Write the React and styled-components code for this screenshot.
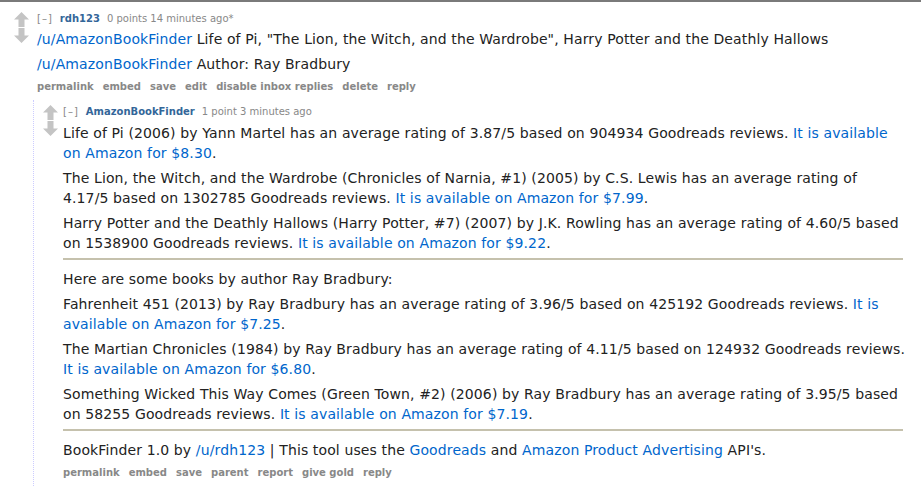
import React from 'react';
import styled, { createGlobalStyle } from 'styled-components';

const Global = createGlobalStyle`
  html, body { margin: 0; padding: 0; background: #fff; }
  body { font-family: "DejaVu Sans", Verdana, sans-serif; color: #222; }
`;

const Page = styled.div`
  border-top: 2px solid #7a7a7a;
  height: 484px;
  overflow: hidden;
`;

const Comment = styled.div`
  display: flex;
  align-items: flex-start;
  padding-top: ${p => p.$top || 0}px;
`;

const Votes = styled.div`
  display: flex;
  flex-direction: column;
  align-items: center;
  gap: 1px;
  width: ${p => p.$w}px;
  padding-left: ${p => p.$pl}px;
  box-sizing: border-box;
  flex: none;
`;

const Entry = styled.div`
  flex: 1;
  min-width: 0;
`;

const Tagline = styled.div`
  font-size: 10px;
  color: #888;
  line-height: 14px;
  display: flex;
  gap: 7px;
  align-items: baseline;
`;

const Expand = styled.span`
  letter-spacing: 1px;
`;

const Author = styled.span`
  color: #369;
  font-weight: bold;
`;

const Body = styled.div`
  font-size: 14px;
  letter-spacing: 0.12px;
  line-height: 20px;
  width: ${p => p.$w}px;
  margin-top: ${p => p.$mt ?? 3}px;
`;

const Para = styled.p`
  margin: 0 0 5px;
  white-space: pre-line;
`;

const Link = styled.span`
  color: #0066cc;
`;

const Rule = styled.hr`
  border: none;
  height: 2px;
  background: #c5c1ad;
  margin: 5px 7px 9px 0;
`;

const Buttons = styled.div`
  display: flex;
  gap: 9px;
  font-size: 10px;
  font-weight: bold;
  color: #888;
  line-height: 16px;
  margin-top: ${p => p.$mt || 0}px;
`;

const Child = styled.div`
  margin-top: 5px;
  margin-left: -4px;
  border-left: 1px dotted #ccccff;
  height: 400px;
`;

const Arrow = ({ down }) => (
  <svg width="15" height="15" viewBox="0 0 15 15" style={down ? { transform: 'rotate(180deg)' } : undefined}>
    <path d="M7.5 0 L15 7.5 L10.5 7.5 L10.5 15 L4.5 15 L4.5 7.5 L0 7.5 Z" fill="#c4c4c4" />
  </svg>
);

const books = [
  ['Life of Pi (2006) by Yann Martel has an average rating of 3.87/5 based on 904934 Goodreads reviews. ', 'It is available on Amazon for $8.30'],
  ['The Lion, the Witch, and the Wardrobe (Chronicles of Narnia, #1) (2005) by C.S. Lewis has an average rating of\n4.17/5 based on 1302785 Goodreads reviews. ', 'It is available on Amazon for $7.99'],
  ['Harry Potter and the Deathly Hallows (Harry Potter, #7) (2007) by J.K. Rowling has an average rating of 4.60/5 based on 1538900 Goodreads reviews. ', 'It is available on Amazon for $9.22'],
];

const bradbury = [
  ['Fahrenheit 451 (2013) by Ray Bradbury has an average rating of 3.96/5 based on 425192 Goodreads reviews. ', 'It is available on Amazon for $7.25'],
  ['The Martian Chronicles (1984) by Ray Bradbury has an average rating of 4.11/5 based on 124932 Goodreads reviews. ', 'It is available on Amazon for $6.80'],
  ['Something Wicked This Way Comes (Green Town, #2) (2006) by Ray Bradbury has an average rating of 3.95/5 based on 58255 Goodreads reviews. ', 'It is available on Amazon for $7.19'],
];

const BookPara = ({ text, link }) => (
  <Para>
    {text}<Link>{link}</Link>.
  </Para>
);

export default function App() {
  return (
    <Page>
      <Global />
      <Comment $top={10}>
        <Votes $w={37} $pl={6}>
          <Arrow />
          <Arrow down />
        </Votes>
        <Entry>
          <Tagline>
            <Expand>[–]</Expand>
            <Author>rdh123</Author>
            <span>0 points 14 minutes ago*</span>
          </Tagline>
          <Body $w={850} $mt={3}>
            <Para><Link>/u/AmazonBookFinder</Link> Life of Pi, "The Lion, the Witch, and the Wardrobe", Harry Potter and the Deathly Hallows</Para>
            <Para><Link>/u/AmazonBookFinder</Link> Author: Ray Bradbury</Para>
          </Body>
          <Buttons $mt={2}>
            <span>permalink</span>
            <span>embed</span>
            <span>save</span>
            <span>edit</span>
            <span>disable inbox replies</span>
            <span>delete</span>
            <span>reply</span>
          </Buttons>
          <Child>
            <Comment $top={5}>
              <Votes $w={29} $pl={3}>
                <Arrow />
                <Arrow down />
              </Votes>
              <Entry>
                <Tagline>
                  <Expand>[–]</Expand>
                  <Author>AmazonBookFinder</Author>
                  <span>1 point 3 minutes ago</span>
                </Tagline>
                <Body $w={847} $mt={4}>
                  {books.map(([t, l], i) => <BookPara key={i} text={t} link={l} />)}
                  <Rule />
                  <Para>Here are some books by author Ray Bradbury:</Para>
                  {bradbury.map(([t, l], i) => <BookPara key={i} text={t} link={l} />)}
                  <Rule />
                  <Para>BookFinder 1.0 by <Link>/u/rdh123</Link> | This tool uses the <Link>Goodreads</Link> and <Link>Amazon Product Advertising</Link> API's.</Para>
                </Body>
                <Buttons>
                  <span>permalink</span>
                  <span>embed</span>
                  <span>save</span>
                  <span>parent</span>
                  <span>report</span>
                  <span>give gold</span>
                  <span>reply</span>
                </Buttons>
              </Entry>
            </Comment>
          </Child>
        </Entry>
      </Comment>
    </Page>
  );
}
